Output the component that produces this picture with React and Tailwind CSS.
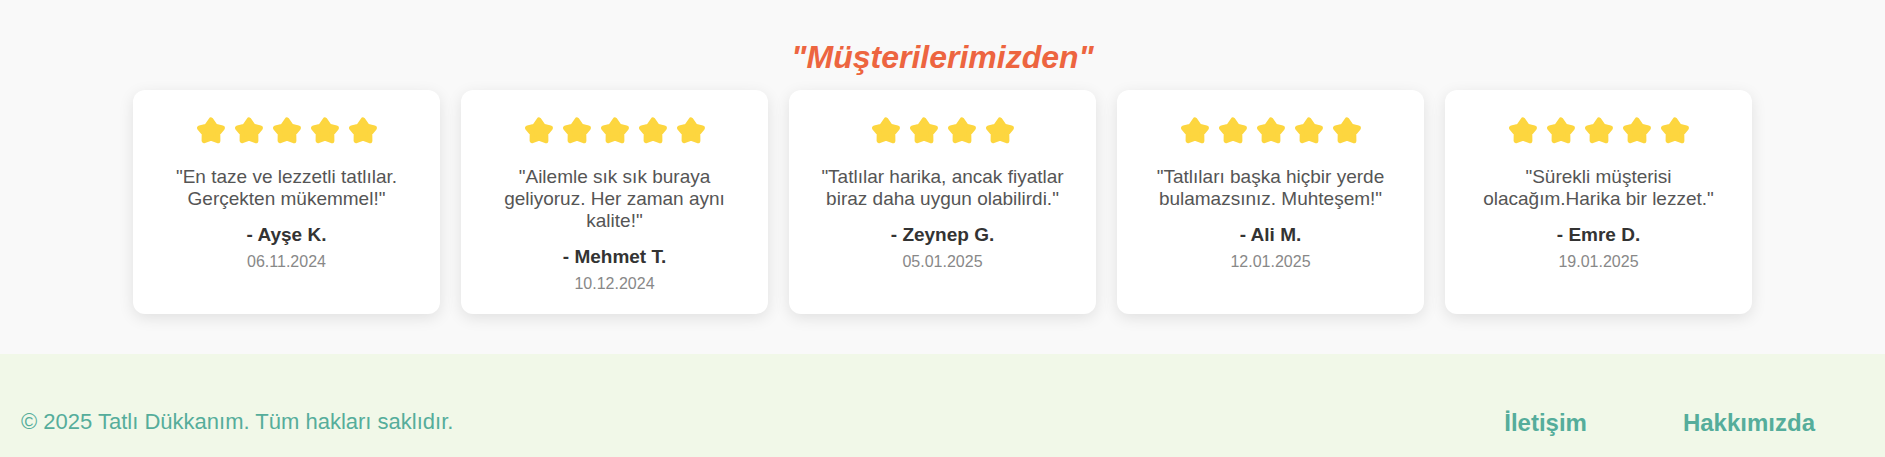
const reviews = [
  { text: '"En taze ve lezzetli tatlılar. Gerçekten mükemmel!"', author: 'Ayşe K.', date: '06.11.2024', stars: 5 },
  { text: '"Ailemle sık sık buraya geliyoruz. Her zaman aynı kalite!"', author: 'Mehmet T.', date: '10.12.2024', stars: 5 },
  { text: '"Tatlılar harika, ancak fiyatlar biraz daha uygun olabilirdi."', author: 'Zeynep G.', date: '05.01.2025', stars: 4 },
  { text: '"Tatlıları başka hiçbir yerde bulamazsınız. Muhteşem!"', author: 'Ali M.', date: '12.01.2025', stars: 5 },
  { text: '"Sürekli müşterisi olacağım.Harika bir lezzet."', author: 'Emre D.', date: '19.01.2025', stars: 5 },
];

function Star() {
  return (
    <svg viewBox="0 0 28 27" className="h-[27px] w-7 text-[#fdd63f]" aria-hidden="true">
      <path
        d="M14 3.1L18.2 9.3L25.3 11L20.7 16.6L20.8 23.6L14 21L7.2 23.6L7.3 16.6L2.7 11L9.8 9.3Z"
        fill="currentColor"
        stroke="currentColor"
        strokeWidth="5.2"
        strokeLinejoin="round"
      />
    </svg>
  );
}

function ReviewCard({ review }) {
  return (
    <article className="min-w-0 flex-1 rounded-xl bg-white px-[30px] pt-[27px] pb-5 text-center shadow-[0_4px_15px_rgba(0,0,0,0.1)]">
      <div className="flex justify-center gap-[10px]" role="img" aria-label={`${review.stars} yıldız`}>
        {Array.from({ length: review.stars }, (_, i) => (
          <Star key={i} />
        ))}
      </div>
      <p className="mt-[22px] text-[19px] leading-[22px] text-[#555]">{review.text}</p>
      <p className="mt-[14px] text-[19px] leading-[22px] font-bold text-[#333]">- {review.author}</p>
      <p className="mt-[6px] text-base leading-5 text-[#888]">{review.date}</p>
    </article>
  );
}

export default function App() {
  return (
    <div className="flex min-h-screen flex-col bg-[#f9f9f9] font-['Liberation_Sans',Arial,sans-serif]">
      <main className="px-[133px] pt-[38px] pb-10">
        <h2 className="text-center text-[32px] leading-[38px] font-bold text-[#ed6540] italic">"Müşterilerimizden"</h2>
        <div className="mt-[14px] flex gap-[21px]">
          {reviews.map((review) => (
            <ReviewCard key={review.author} review={review} />
          ))}
        </div>
      </main>
      <footer className="flex grow items-start justify-between bg-[#f1f8e8] pt-[54px] pr-[70px] pb-5 pl-[21px] text-[#55ad9b]">
        <p className="text-[22px] leading-7">© 2025 Tatlı Dükkanım. Tüm hakları saklıdır.</p>
        <nav className="flex gap-24 text-[24px] leading-[30px] font-bold">
          <a href="#iletisim">İletişim</a>
          <a href="#hakkimizda">Hakkımızda</a>
        </nav>
      </footer>
    </div>
  );
}
